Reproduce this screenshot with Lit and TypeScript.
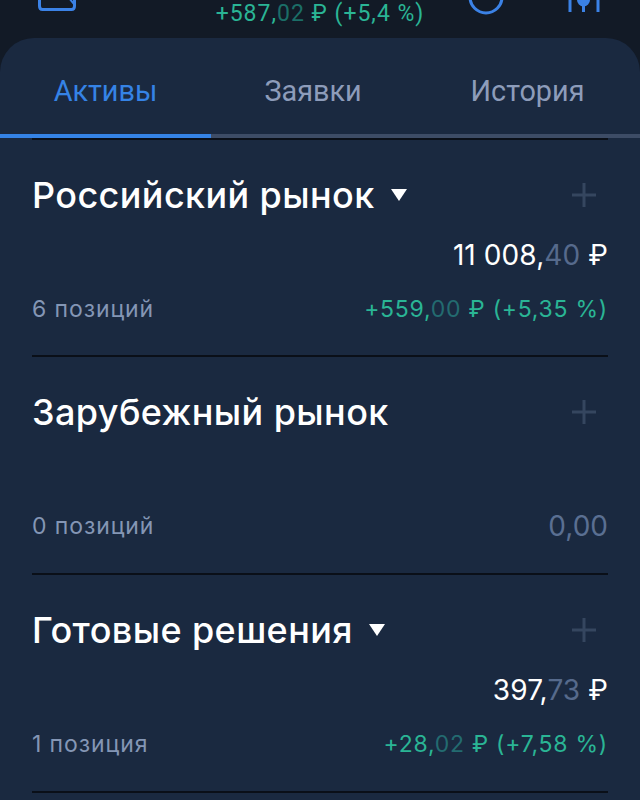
import { LitElement, css, html } from "lit";
import { customElement } from "lit/decorators.js";

type Section = {
  title: string;
  arrow: boolean;
  count: string;
  total?: [string, string];
  gain?: [string, string, string];
};

const sections: Section[] = [
  {
    title: "Российский рынок",
    arrow: true,
    count: "6 позиций",
    total: ["11 008,", "40"],
    gain: ["+559,", "00", " ₽ (+5,35 %)"],
  },
  { title: "Зарубежный рынок", arrow: false, count: "0 позиций" },
  {
    title: "Готовые решения",
    arrow: true,
    count: "1 позиция",
    total: ["397,", "73"],
    gain: ["+28,", "02", " ₽ (+7,58 %)"],
  },
];

@customElement("app-root")
export class AppRoot extends LitElement {
  static styles = css`
    :host {
      display: block;
      width: 640px;
      height: 800px;
      overflow: hidden;
      background: #121a26;
      font-family: Inter, "Noto Sans", sans-serif;
    }
    .top {
      height: 38px;
      position: relative;
    }
    .top svg {
      position: absolute;
      top: 0;
      fill: none;
      stroke: #3b82e6;
      stroke-width: 3;
    }
    .top .wallet {
      left: 36px;
    }
    .top .circle {
      left: 466px;
    }
    .top .sliders {
      left: 562px;
    }
    .day-gain {
      text-align: center;
      font-family: Roboto, sans-serif;
      font-size: 23px;
      line-height: 28px;
      color: #2ab595;
      letter-spacing: 1px;
    }
    .day-gain i {
      font-style: normal;
      color: #1b6e67;
    }
    .panel {
      height: 800px;
      background: #1a2940;
      border-radius: 34px 34px 0 0;
    }
    .tabs {
      display: grid;
      grid-template-columns: 211px 204px 1fr;
      height: 96px;
      border-bottom: 4px solid #3d4c66;
      font-family: Roboto, sans-serif;
      font-size: 28.8px;
      color: #8d9cba;
    }
    .tab {
      display: flex;
      justify-content: center;
      align-items: flex-start;
      padding-top: 35px;
      line-height: 36px;
    }
    .tab.active {
      color: #3583e6;
      box-shadow: 0 4px 0 #3583e6;
    }
    .list {
      padding: 0 32px;
    }
    .section {
      height: 218px;
      box-sizing: border-box;
      border-top: 2px solid #0a0f18;
      display: flex;
      flex-direction: column;
    }
    .section.first {
      height: 217px;
    }
    .section.last {
      height: 220px;
      border-bottom: 2px solid #0a0f18;
    }
    .head {
      display: flex;
      align-items: center;
      margin-top: 35px;
      height: 40px;
    }
    .title {
      font-size: 36px;
      font-weight: 500;
      color: #fff;
      letter-spacing: 0.4px;
    }
    .arrow {
      width: 0;
      height: 0;
      margin-left: 16px;
      border-left: 8px solid transparent;
      border-right: 8px solid transparent;
      border-top: 12px solid #fff;
    }
    .plus {
      margin-left: auto;
      margin-right: 11px;
      stroke: #35465f;
      stroke-width: 3;
    }
    .value {
      height: 30px;
      margin-top: 25px;
      text-align: right;
      font-size: 28px;
      line-height: 30px;
      color: #fff;
      letter-spacing: 0.1px;
    }
    .value i {
      font-style: normal;
      color: #566a8c;
    }
    .bottom {
      display: flex;
      justify-content: space-between;
      align-items: center;
      margin-top: 24px;
      height: 30px;
      font-size: 23px;
      color: #8496b5;
      letter-spacing: 0.9px;
    }
    .gain {
      color: #2ab595;
      letter-spacing: 0.75px;
    }
    .gain i {
      font-style: normal;
      color: #236b70;
    }
    .zero {
      font-size: 28px;
      color: #5a6f92;
      letter-spacing: 0;
    }
  `;

  renderSection(s: Section, i: number) {
    const cls = i === 0 ? "first" : i === sections.length - 1 ? "last" : "";
    return html`
      <div class="section ${cls}">
        <div class="head">
          <span class="title">${s.title}</span>
          ${s.arrow ? html`<span class="arrow"></span>` : ""}
          <svg class="plus" width="26" height="26" viewBox="0 0 26 26">
            <path d="M13 1v24M1 13h24" />
          </svg>
        </div>
        <div class="value">
          ${s.total ? html`${s.total[0]}<i>${s.total[1]}</i> ₽` : ""}
        </div>
        <div class="bottom">
          <span>${s.count}</span>
          ${s.gain
            ? html`<span class="gain"
                >${s.gain[0]}<i>${s.gain[1]}</i>${s.gain[2]}</span
              >`
            : html`<span class="zero">0,00</span>`}
        </div>
      </div>
    `;
  }

  render() {
    return html`
      <div class="top">
        <svg class="wallet" width="42" height="14" viewBox="0 0 42 14">
          <path d="M3.500-6v12q0 3.500 3 3.500h29q3 0 3-3.500v-12" />
          <path d="M33-2l5 6" stroke-width="2" />
        </svg>
        <svg class="circle" width="40" height="16" viewBox="0 0 40 16">
          <circle cx="20" cy="-3" r="16" />
        </svg>
        <svg class="sliders" width="44" height="14" viewBox="0 0 44 14">
          <path d="M8 0v12M21.500 0v12M36 0v12" />
          <circle cx="21.500" cy="0" r="5" fill="#3b82e6" />
        </svg>
        <div class="day-gain">+587,<i>02</i> ₽ (+5,4 %)</div>
      </div>
      <div class="panel">
        <div class="tabs">
          <div class="tab active">Активы</div>
          <div class="tab">Заявки</div>
          <div class="tab">История</div>
        </div>
        <div class="list">
          ${sections.map((s, i) => this.renderSection(s, i))}
        </div>
      </div>
    `;
  }
}
